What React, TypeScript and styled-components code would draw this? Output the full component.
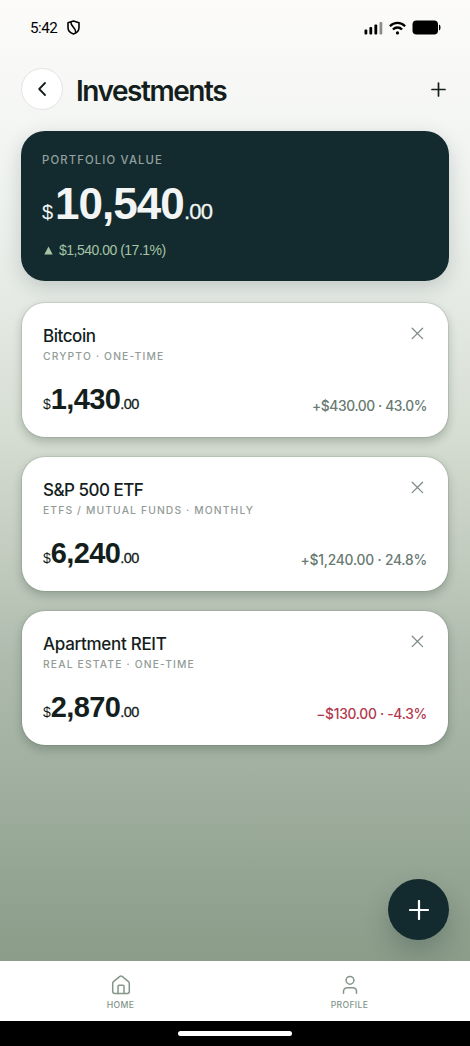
import React from "react";
import styled, { createGlobalStyle } from "styled-components";

const GlobalStyle = createGlobalStyle`
  *, *::before, *::after { box-sizing: border-box; }
  body { margin: 0; }
  button { appearance: none; border: 0; padding: 0; background: none; color: inherit; font: inherit; }
`;

const Screen = styled.div`
  position: relative;
  width: 470px;
  height: 1046px;
  display: flex;
  flex-direction: column;
  overflow: hidden;
  color: #141e1c;
  font-family: Inter, "Liberation Sans", sans-serif;
  background: linear-gradient(180deg, #fcfbf9 0px, #f4f6f4 125px, #e7ebe6 290px, #d6ddd2 430px, #bfc9bc 570px, #aebbad 660px, #a0af9f 780px, #8b9c89 961px);
`;

const StatusBar = styled.div`
  display: flex;
  align-items: center;
  justify-content: space-between;
  height: 55px;
  padding: 0 29px 0 30px;
  color: #000;
`;

const StatusGroup = styled.div<{ $gap: number }>`
  display: flex;
  align-items: center;
  gap: ${(p) => p.$gap}px;
`;

const Clock = styled.span`
  font: 400 15.2px/20px Roboto, sans-serif;
  letter-spacing: -0.5px;
`;

const Header = styled.header`
  display: flex;
  align-items: center;
  height: 42px;
  margin: 13px 24px 0 21px;
`;

const BackButton = styled.button`
  display: grid;
  place-items: center;
  width: 42px;
  height: 42px;
  border: 1px solid #e3e5e3;
  border-radius: 50%;
  background: #fff;
`;

const Title = styled.h1`
  flex: 1;
  margin: 3px 0 0 13px;
  font-size: 28px;
  line-height: 36px;
  font-weight: 630;
  letter-spacing: -1.45px;
`;

const AddButton = styled.button`
  display: grid;
  place-items: center;
`;

const Main = styled.main`
  flex: 1;
  display: flex;
  flex-direction: column;
  padding: 21px 21px 0;
`;

const Portfolio = styled.section`
  height: 149.5px;
  padding: 21px;
  border-radius: 24px;
  background: #132b2e;
  color: #f2f5f3;
  box-shadow: 0 6px 20px rgba(19, 43, 46, 0.18);
`;

const PortfolioLabel = styled.div`
  font-size: 11.3px;
  line-height: 16px;
  font-weight: 500;
  letter-spacing: 1.15px;
  color: #93a09f;
`;

const PortfolioAmount = styled.div`
  display: flex;
  align-items: baseline;
  height: 50px;
  margin-top: 11px;
  line-height: 50px;
`;

const Currency = styled.span<{ $size: number; $width: number }>`
  width: ${(p) => p.$width}px;
  font-family: "Liberation Sans", sans-serif;
  font-size: ${(p) => p.$size}px;
  font-weight: 400;
`;

const Whole = styled.span<{ $size: number; $spacing: number }>`
  font-family: "Liberation Sans", sans-serif;
  font-size: ${(p) => p.$size}px;
  font-weight: 700;
  letter-spacing: ${(p) => p.$spacing}px;
`;

const Cents = styled.span<{ $size: number; $spacing: number }>`
  font-family: "Liberation Sans", sans-serif;
  font-size: ${(p) => p.$size}px;
  letter-spacing: ${(p) => p.$spacing}px;
  -webkit-text-stroke: 0.3px currentColor;
`;

const PortfolioGain = styled.div`
  display: flex;
  align-items: center;
  gap: 6px;
  margin: 12px 0 0 2px;
  font-family: "Liberation Sans", sans-serif;
  font-size: 14px;
  line-height: 18px;
  letter-spacing: -0.5px;
  color: #a3c4a5;
`;

const Holdings = styled.div`
  display: flex;
  flex-direction: column;
  gap: 17.5px;
  margin-top: 21.3px;
`;

const Card = styled.article`
  display: flex;
  flex-direction: column;
  justify-content: space-between;
  height: 136.4px;
  padding: 21.2px 21px 21px;
  border: 1px solid rgba(60, 80, 66, 0.12);
  background-clip: padding-box;
  border-radius: 24px;
  background-color: #fff;
  box-shadow: 0 4px 9px rgba(25, 45, 32, 0.22);
`;

const CardRow = styled.div<{ $align: string }>`
  display: flex;
  justify-content: space-between;
  align-items: ${(p) => p.$align};
`;

const CardName = styled.h2<{ $spacing: number }>`
  margin: 0;
  font-size: 17px;
  line-height: 24px;
  font-weight: 500;
  letter-spacing: ${(p) => p.$spacing}px;
`;

const CardKind = styled.div<{ $spacing: number }>`
  font-size: 10.3px;
  line-height: 17px;
  font-weight: 500;
  letter-spacing: ${(p) => p.$spacing}px;
  color: #929c97;
`;

const RemoveButton = styled.button`
  display: grid;
  place-items: center;
  width: 19px;
  height: 19px;
`;

const CardAmount = styled.div`
  display: flex;
  align-items: baseline;
  height: 34px;
  line-height: 34px;
`;

const CardGain = styled.div<{ $loss?: boolean; $spacing: number }>`
  font-size: 13.8px;
  line-height: 20px;
  font-weight: 550;
  letter-spacing: ${(p) => p.$spacing}px;
  color: ${(p) => (p.$loss ? "#b23a4d" : "#687a72")};
`;

const Fab = styled.button`
  position: absolute;
  right: 21px;
  top: 879px;
  display: grid;
  place-items: center;
  width: 61px;
  height: 61px;
  border-radius: 50%;
  background: #132b2e;
  box-shadow: 0 12px 24px rgba(19, 43, 46, 0.24);
`;

const Nav = styled.nav`
  position: relative;
  display: flex;
  height: 59.5px;
  padding: 0 6px;
  background: #fff;
`;

const NavItem = styled.button`
  flex: 1;
  display: flex;
  flex-direction: column;
  align-items: center;
  padding-top: 14px;
  font-size: 8.7px;
  line-height: 12px;
  font-weight: 550;
  letter-spacing: 0.3px;
  color: #84968a;
`;

const NavLabel = styled.span`
  margin-top: 4px;
`;

const SystemBar = styled.div`
  position: relative;
  display: flex;
  justify-content: center;
  height: 25.5px;
  padding-top: 10.5px;
  background: #000;
`;

const HomeIndicator = styled.div`
  width: 114px;
  height: 4.5px;
  border-radius: 3px;
  background: #fff;
`;

const PlusIcon = ({ size, width, color }: { size: number; width: number; color: string }) => (
  <svg width={size} height={size} viewBox={`0 0 ${size} ${size}`} stroke={color} strokeWidth={width} strokeLinecap="round">
    <path d={`M${size / 2} 1V${size - 1}M1 ${size / 2}H${size - 1}`} />
  </svg>
);

interface Holding {
  name: string;
  nameSpacing: number;
  kind: string;
  kindSpacing: number;
  whole: string;
  gain: string;
  gainSpacing: number;
  loss?: boolean;
}

const holdings: Holding[] = [
  { name: "Bitcoin", nameSpacing: -0.45, kind: "CRYPTO · ONE-TIME", kindSpacing: 1.16, whole: "1,430", gain: "+$430.00 · 43.0%", gainSpacing: -0.4 },
  { name: "S&P 500 ETF", nameSpacing: -0.5, kind: "ETFS / MUTUAL FUNDS · MONTHLY", kindSpacing: 1.14, whole: "6,240", gain: "+$1,240.00 · 24.8%", gainSpacing: -0.2 },
  { name: "Apartment REIT", nameSpacing: -0.3, kind: "REAL ESTATE · ONE-TIME", kindSpacing: 1.16, whole: "2,870", gain: "−$130.00 · -4.3%", gainSpacing: -0.28, loss: true },
];

const HoldingCard = ({ item }: { item: Holding }) => (
  <Card>
    <CardRow $align="flex-start">
      <div>
        <CardName $spacing={item.nameSpacing}>{item.name}</CardName>
        <CardKind $spacing={item.kindSpacing}>{item.kind}</CardKind>
      </div>
      <RemoveButton aria-label={`Remove ${item.name}`}>
        <svg width="13" height="13" viewBox="0 0 13 13" stroke="#7f8c86" strokeWidth="1.3" strokeLinecap="round">
          <path d="M1.2 1.2L11.6 11.6M11.6 1.2L1.2 11.6" />
        </svg>
      </RemoveButton>
    </CardRow>
    <CardRow $align="flex-end">
      <CardAmount>
        <Currency $size={14} $width={7.8}>$</Currency>
        <Whole $size={29} $spacing={-0.65}>{item.whole}</Whole>
        <Cents $size={14.5} $spacing={-0.5}>.00</Cents>
      </CardAmount>
      <CardGain $loss={item.loss} $spacing={item.gainSpacing}>{item.gain}</CardGain>
    </CardRow>
  </Card>
);

export default function App() {
  return (
    <Screen>
      <GlobalStyle />
      <StatusBar>
        <StatusGroup $gap={10}>
          <Clock>5:42</Clock>
          <svg width="13" height="15" viewBox="0 0 13 15" fill="none" stroke="#000" strokeWidth="1.6" strokeLinejoin="round" strokeLinecap="round">
            <path d="M6.5 1L12 2.8V7.5C12 10.8 9.8 13 6.5 14C3.2 13 1 10.8 1 7.5V2.8Z" />
            <path d="M3.9 2.3C3.7 7.2 9.2 7.2 8.7 12.4" strokeWidth="1.5" />
          </svg>
        </StatusGroup>
        <StatusGroup $gap={6}>
          <svg width="19" height="14" viewBox="0 0 19 14">
            <rect x="0.5" y="8.5" width="2.8" height="5" rx="1" />
            <rect x="5.4" y="6" width="2.8" height="7.5" rx="1" />
            <rect x="10.4" y="3.5" width="2.8" height="10" rx="1" />
            <rect x="15.5" y="1" width="2.8" height="12.5" rx="1" fill="#8b8b8b" />
          </svg>
          <svg width="17" height="14" viewBox="0 0 17 14" fill="none" stroke="#000" strokeWidth="2.3">
            <path d="M0.9 5.3C5.1 0.8 11.9 0.8 16.1 5.3" />
            <path d="M3.9 8.5C6.5 5.8 10.5 5.8 13.1 8.5" />
            <circle cx="8.5" cy="11.9" r="1.6" fill="#000" stroke="none" />
          </svg>
          <svg width="29" height="15" viewBox="0 0 29 15">
            <rect x="0.5" y="0.5" width="25.5" height="14" rx="4" />
            <path d="M27 4.5C29 5 29 10 27 10.5Z" />
          </svg>
        </StatusGroup>
      </StatusBar>

      <Header>
        <BackButton aria-label="Back">
          <svg width="9" height="14" viewBox="0 0 9 14" fill="none" stroke="#141e1c" strokeWidth="1.8" strokeLinecap="round" strokeLinejoin="round">
            <path d="M7 1L1.2 7L7 13" />
          </svg>
        </BackButton>
        <Title>Investments</Title>
        <AddButton aria-label="Add investment">
          <PlusIcon size={15} width={1.7} color="#141e1c" />
        </AddButton>
      </Header>

      <Main>
        <Portfolio>
          <PortfolioLabel>PORTFOLIO VALUE</PortfolioLabel>
          <PortfolioAmount>
            <Currency $size={20} $width={13}>$</Currency>
            <Whole $size={44} $spacing={-0.95}>10,540</Whole>
            <Cents $size={22} $spacing={-0.7}>.00</Cents>
          </PortfolioAmount>
          <PortfolioGain>
            <svg width="9" height="9" viewBox="0 0 9 9" fill="currentColor"><path d="M4.5 0.5L8.7 8.5H0.3Z" /></svg>
            <span>$1,540.00 (17.1%)</span>
          </PortfolioGain>
        </Portfolio>
        <Holdings>
          {holdings.map((item) => <HoldingCard key={item.name} item={item} />)}
        </Holdings>
      </Main>

      <Fab aria-label="Add">
        <PlusIcon size={20} width={2.2} color="#fff" />
      </Fab>

      <Nav>
        <NavItem>
          <svg width="20" height="20" viewBox="0 0 20 20" fill="none" stroke="currentColor" strokeWidth="1.5" strokeLinejoin="round" strokeLinecap="round">
            <path d="M1.7 8.2C1.7 7.5 2 7 2.5 6.6L8.9 1.4C9.6 0.9 10.4 0.9 11.1 1.4L17.5 6.6C18 7 18.3 7.5 18.3 8.2V16.6C18.3 17.7 17.5 18.5 16.4 18.5H3.6C2.5 18.5 1.7 17.7 1.7 16.6Z" />
            <path d="M7 18.5V11.3C7 10.7 7.4 10.3 8 10.3H12C12.6 10.3 13 10.7 13 11.3V18.5" />
          </svg>
          <NavLabel>HOME</NavLabel>
        </NavItem>
        <NavItem>
          <svg width="20" height="20" viewBox="0 0 20 20" fill="none" stroke="currentColor" strokeWidth="1.5" strokeLinecap="round">
            <circle cx="10" cy="5.3" r="3.9" />
            <path d="M3.5 18.3V16.5C3.5 14.2 5 12.7 7.3 12.7H12.7C15 12.7 16.5 14.2 16.5 16.5V18.3" />
          </svg>
          <NavLabel>PROFILE</NavLabel>
        </NavItem>
      </Nav>
      <SystemBar><HomeIndicator /></SystemBar>
    </Screen>
  );
}
